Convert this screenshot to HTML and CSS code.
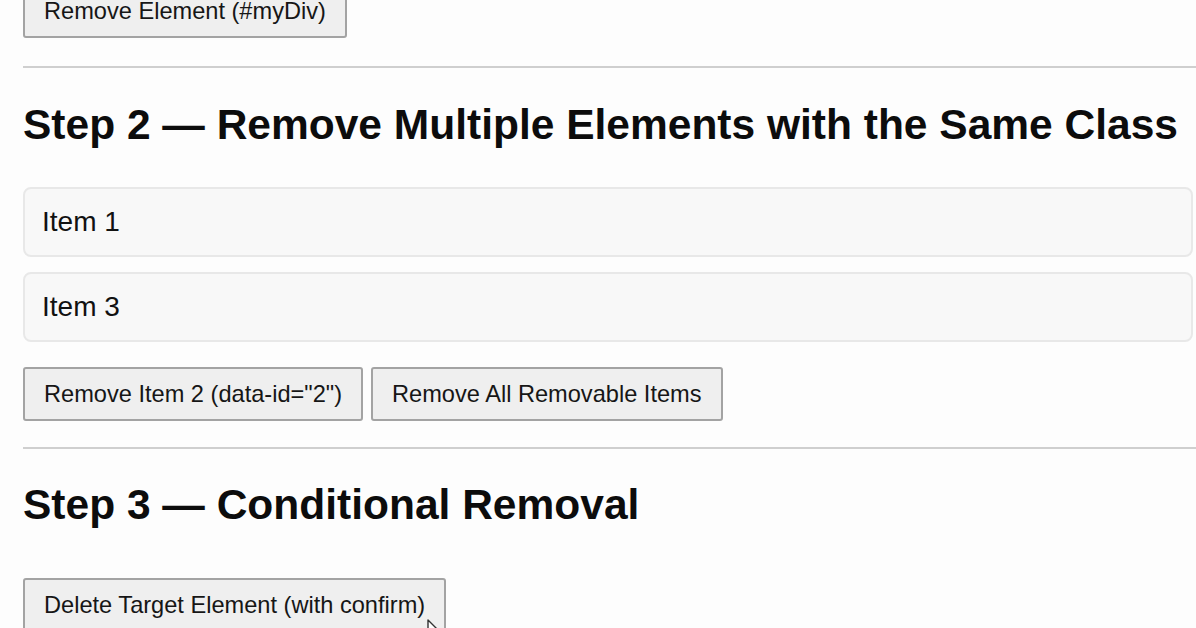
FILE: index.html
```html
<!DOCTYPE html>
<html lang="en">

<head>
    <meta charset="UTF-8">
    <meta name="viewport" content="width=device-width, initial-scale=1.0">
    <title>Removing Elements</title>
    <link rel="stylesheet" href="styles.css">
</head>

<body>
    <div class="page">
        <div class="row first">
            <button class="btn">Remove Element (#myDiv)</button>
        </div>
        <hr class="sep">

        <h2 class="step">Step 2 — Remove Multiple Elements with the Same Class</h2>
        <div class="list">
            <div class="item removable" data-id="1">Item 1</div>
            <div class="item removable" data-id="3">Item 3</div>
        </div>
        <div class="row actions">
            <button class="btn">Remove Item 2 (data-id="2")</button>
            <button class="btn">Remove All Removable Items</button>
        </div>
        <hr class="sep">

        <h2 class="step last">Step 3 — Conditional Removal</h2>
        <div class="row">
            <button class="btn target">Delete Target Element (with confirm)
                <!-- mouse pointer hovering the button -->
                <svg class="cursor" width="20" height="30" viewBox="0 0 20 30">
                    <path d="M1 1 L1 24 L6.5 18.5 L10.5 27.5 L14 26 L10 17.5 L17.5 17.5 Z" fill="#fff" stroke="#333" stroke-width="1.4" stroke-linejoin="round" />
                </svg>
            </button>
        </div>
    </div>
</body>

</html>
```
FILE: styles.css
```css
html,
body {
    margin: 0;
    height: 100%;
    overflow: hidden;
}

body {
    background-color: #fdfdfd;
    color: #111;
    font-family: "Liberation Sans", Arial, sans-serif;
}

.page {
    padding: 0 3px 0 23px;
}

.row {
    display: flex;
    gap: 8px;
}

.first {
    margin-top: -16px;
}

.btn {
    position: relative;
    padding: 12px 19px;
    border: 2px solid #a3a3a3;
    border-radius: 3px;
    background-color: #efefef;
    color: #161616;
    font-family: "Liberation Sans", Arial, sans-serif;
    font-size: 23.6px;
    line-height: 26px;
}

.sep {
    height: 0;
    margin: 28px -3px 0 0;
    border: 0;
    border-top: 2px solid #cfcfcf;
}

.step {
    margin: 33px 0 38px;
    font-size: 42.5px;
    line-height: 48px;
    font-weight: bold;
    color: #0c0c0c;
}

.step.last {
    margin: 32px 0 49px;
}

.list {
    display: flex;
    flex-direction: column;
    gap: 15px;
}

.item {
    padding: 17px;
    border: 2px solid #e8e8e8;
    border-radius: 8px;
    background-color: #f8f8f8;
    font-size: 28px;
    line-height: 32px;
}

.actions {
    margin-top: 25px;
}

.actions + .sep {
    margin-top: 26px;
}

.cursor {
    position: absolute;
    left: 402px;
    top: 39px;
}
```
